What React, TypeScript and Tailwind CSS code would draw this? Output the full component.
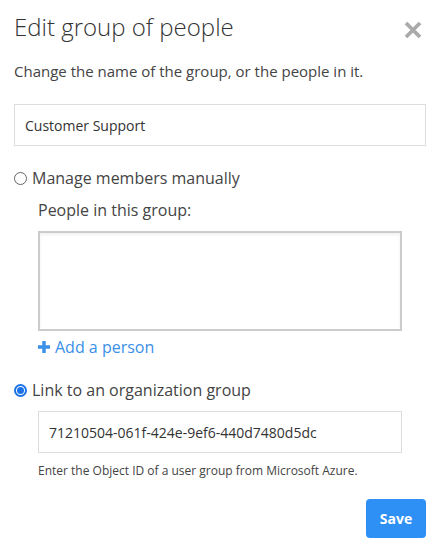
import { useState } from "react";

function Radio({ checked }: { checked: boolean }) {
  return checked ? (
    <span className="flex h-[13px] w-[13px] shrink-0 items-center justify-center rounded-full border-2 border-[#1a73e8]">
      <span className="h-[7px] w-[7px] rounded-full bg-[#1a73e8]" />
    </span>
  ) : (
    <span className="h-[13px] w-[13px] shrink-0 rounded-full border border-[#666]" />
  );
}

export default function App() {
  const [mode, setMode] = useState<"manual" | "org">("org");

  return (
    <div className="min-h-[551px] w-[441px] bg-white font-['Open_Sans',sans-serif] text-[#444]">
      <div className="flex flex-col pl-[14px] pr-[15px] pt-[11px]">
        {/* Header */}
        <div className="flex h-[32px] items-center justify-between">
          <h1 className="text-[24px] font-light leading-[32px] text-[#333]">Edit group of people</h1>
          <button className="mr-[4px] mt-[6px] text-[#aaa]" aria-label="Close">
            <svg width="18" height="18" viewBox="0 0 18 18">
              <path d="M2 2 L16 16 M16 2 L2 16" stroke="currentColor" strokeWidth="3.8" strokeLinecap="butt" />
            </svg>
          </button>
        </div>

        <p className="mt-[16px] text-[15px] leading-[24px] text-[#444]">
          Change the name of the group, or the people in it.
        </p>

        <input
          className="mt-[21px] h-[42px] w-full border border-[#ddd] px-[10px] text-[14px] text-[#333] outline-none"
          defaultValue="Customer Support"
        />

        {/* Manual members */}
        <label className="mt-[20px] flex h-[24px] cursor-pointer items-center gap-[5px] text-[16px] leading-[24px]" onClick={() => setMode("manual")}>
          <Radio checked={mode === "manual"} />
          <span>Manage members manually</span>
        </label>
        <div className="pl-[24px]">
          <div className="mt-[8px] text-[16px] leading-[24px]">People in this group:</div>
          <div className="mt-[9px] h-[100px] w-[364px] border-2 border-[#ccc] shadow-[inset_0_2px_3px_rgba(0,0,0,0.06)]" />
          <button className="mt-[4px] flex h-[24px] items-center gap-[5px] text-[16px] leading-[24px] text-[#3a8fe8]">
            <svg width="12" height="12" viewBox="0 0 12 12">
              <path d="M6 0 V12 M0 6 H12" stroke="currentColor" strokeWidth="3.4" />
            </svg>
            <span>Add a person</span>
          </button>
        </div>

        {/* Organization group */}
        <label className="mt-[19px] flex h-[24px] cursor-pointer items-center gap-[5px] text-[16px] leading-[24px]" onClick={() => setMode("org")}>
          <Radio checked={mode === "org"} />
          <span>Link to an organization group</span>
        </label>
        <div className="pl-[24px]">
          <input
            className="mt-[9px] h-[42px] w-[364px] border border-[#ddd] px-[10px] text-[14px] text-[#333] outline-none"
            defaultValue="71210504-061f-424e-9ef6-440d7480d5dc"
          />
          <div className="mt-[9px] text-[12px] leading-[18px] text-[#444]">
            Enter the Object ID of a user group from Microsoft Azure.
          </div>
        </div>

        <div className="mt-[19px] flex justify-end">
          <button className="h-[39px] w-[60px] rounded-[4px] bg-[#2e90f5] text-[14px] font-bold text-white">Save</button>
        </div>
      </div>
    </div>
  );
}
